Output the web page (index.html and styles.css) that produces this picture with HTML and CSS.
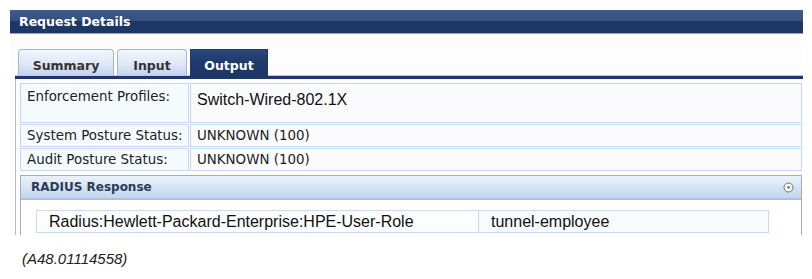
FILE: index.html
```html
<!DOCTYPE html>
<html lang="en">
  <head>
    <meta charset="UTF-8" />
    <title>Request Details</title>
    <link rel="stylesheet" href="styles.css">
  </head>
  <body>
    <div class="app">
      <div class="titlebar">Request Details</div>
      <div class="content">
        <div class="tabs">
          <span class="tab tab-summary">Summary</span>
          <span class="tab tab-input">Input</span>
          <span class="tab tab-output active">Output</span>
        </div>
        <div class="tabline"></div>
        <div class="panel">
          <table class="details">
            <tr class="tall">
              <td class="label">Enforcement Profiles:</td>
              <td class="value big">Switch-Wired-802.1X</td>
            </tr>
            <tr>
              <td class="label">System Posture Status:</td>
              <td class="value">UNKNOWN (100)</td>
            </tr>
            <tr>
              <td class="label">Audit Posture Status:</td>
              <td class="value">UNKNOWN (100)</td>
            </tr>
          </table>
          <div class="section">
            <div class="section-head">
              <span>RADIUS Response</span>
              <svg class="toggle" width="11" height="11" viewBox="0 0 11 11">
                <circle cx="5.5" cy="5.5" r="4.5" fill="#fff" stroke="#6b6f78" stroke-width="1" />
                <path d="M3.5 4.5 L7.5 4.5 L5.5 7 Z" fill="#555" />
              </svg>
            </div>
            <table class="attrs">
              <tr>
                <td class="attr-name">Radius:Hewlett-Packard-Enterprise:HPE-User-Role</td>
                <td class="attr-value">tunnel-employee</td>
              </tr>
            </table>
          </div>
        </div>
      </div>
    </div>
    <p class="caption">(A48.01114558)</p>
  </body>
</html>
```

FILE: styles.css
```css
body,
html {
  margin: 0;
  background-color: #fff;
}

body {
  font-family: "DejaVu Sans", Verdana, sans-serif;
}

.app {
  margin: 10px 0 0 10px;
  width: 793px;
  height: 225px;
  overflow: hidden;
  background-color: #fdfdfd;
}

.titlebar {
  height: 23px;
  line-height: 23px;
  padding-left: 9px;
  color: #fff;
  font-size: 12.5px;
  font-weight: bold;
  background: linear-gradient(#3e5c8a, #33507e 48%, #1d3767 48%, #1c3666);
  border-bottom: 1px solid #96a4c8;
}

.content {
  margin-left: 5px;
  padding-top: 15px;
}

.tabs {
  display: flex;
  gap: 3px;
  padding-left: 3px;
  height: 26px;
}

.tab {
  box-sizing: border-box;
  height: 26px;
  padding-top: 5px;
  line-height: 21px;
  text-align: center;
  font-size: 12.5px;
  font-weight: bold;
  color: #333;
  border: 1px solid #a7b5d3;
  border-bottom: none;
  border-radius: 4px 4px 0 0;
  background: linear-gradient(#f2f6fc, #dfe8f6 55%, #c3d4ee);
}

.tab-summary {
  width: 96px;
}

.tab-input {
  width: 70px;
}

.tab-output {
  width: 78px;
}

.tab.active {
  height: 27px;
  color: #fff;
  border-color: #1f3a6b;
  border-radius: 0;
  background: linear-gradient(#2a497b, #1e3a6b 45%, #1d3767);
}

.tabline {
  border-top: 1px solid #c4c6cc;
  height: 3px;
  background-color: #1d3767;
}

.panel {
  border-left: 1px solid #b3b7c6;
  padding: 3px 0 0 3px;
  height: 160px;
}

.details {
  width: 784px;
  border-spacing: 1px;
  font-size: 13.4px;
  color: #222;
}

.details td {
  box-sizing: border-box;
  height: 23px;
  border: 1px solid #c6d6ef;
  padding: 2px 6px;
  line-height: 17px;
  vertical-align: top;
  white-space: nowrap;
}

.details .label {
  width: 169px;
  padding-right: 4px;
  background-color: #f4fafd;
}

.details .value {
  background-color: #fbfbfd;
}

.details .tall td {
  height: 40px;
  padding-top: 4px;
}

.details .tall .value.big {
  padding-top: 7px;
  font-family: "Liberation Sans", Arial, sans-serif;
  font-size: 16px;
  color: #111;
}

.section {
  margin: 3px 1px 0 1px;
  border: 1px solid #a6abbd;
  border-bottom: none;
  height: 70px;
  background-color: #fff;
}

.section-head {
  display: flex;
  justify-content: space-between;
  align-items: center;
  height: 22px;
  padding: 0 7px 0 10px;
  font-size: 12px;
  font-weight: bold;
  color: #2b3a55;
  background: linear-gradient(#ebf2fb, #d6e4f4 50%, #c3d6ee);
  border-bottom: 2px solid #a9c1e2;
}

.toggle {
  display: block;
}

.attrs {
  margin: 10px 0 0 15px;
  width: 733px;
  border-collapse: collapse;
  font-family: "Liberation Sans", Arial, sans-serif;
  font-size: 16px;
  color: #111;
}

.attrs td {
  border: 1px solid #c9d9f1;
  height: 21px;
  padding: 0 12px;
  line-height: 19px;
  white-space: nowrap;
}

.attr-name {
  width: 417px;
  background-color: #fbfdff;
}

.attr-value {
  background-color: #f8fbfe;
}

.caption {
  margin: 15px 0 0 22px;
  font-family: "Liberation Sans", Arial, sans-serif;
  font-style: italic;
  font-size: 15px;
  line-height: 17px;
  color: #222;
}
```
